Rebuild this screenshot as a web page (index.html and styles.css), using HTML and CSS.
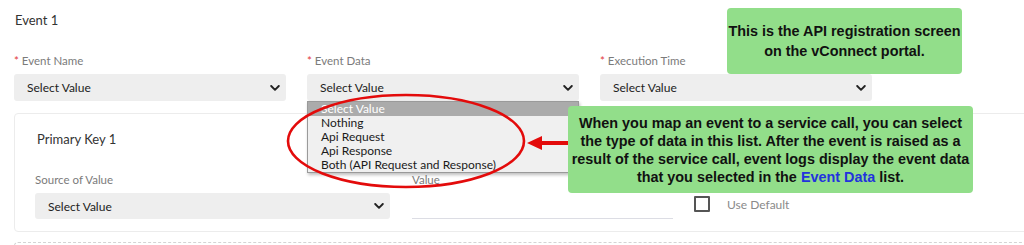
FILE: index.html
```html
<!DOCTYPE html>
<html lang="en">
<head>
<meta charset="utf-8">
<title>Event 1</title>
<link rel="stylesheet" href="styles.css">
</head>
<body>
<div class="page">
  <div class="event-title">Event 1</div>

  <div class="fields">
    <div class="field">
      <div class="label"><span class="req">*</span> Event Name</div>
      <div class="select"><span>Select Value</span><svg class="chev" viewBox="0 0 10 6" width="10" height="6"><polyline points="1.2,1 5,4.8 8.8,1"/></svg></div>
    </div>
    <div class="field field-open">
      <div class="label"><span class="req">*</span> Event Data</div>
      <div class="select"><span>Select Value</span><svg class="chev" viewBox="0 0 10 6" width="10" height="6"><polyline points="1.2,1 5,4.8 8.8,1"/></svg></div>
      <ul class="dropdown">
        <li class="opt opt-active">Select Value</li>
        <li class="opt">Nothing</li>
        <li class="opt">Api Request</li>
        <li class="opt">Api Response</li>
        <li class="opt">Both (API Request and Response)</li>
      </ul>
    </div>
    <div class="field">
      <div class="label"><span class="req">*</span> Execution Time</div>
      <div class="select"><span>Select Value</span><svg class="chev" viewBox="0 0 10 6" width="10" height="6"><polyline points="1.2,1 5,4.8 8.8,1"/></svg></div>
    </div>
  </div>

  <div class="card">
    <div class="card-title">Primary Key 1</div>
    <div class="card-row">
      <div class="field field-source">
        <div class="label">Source of Value</div>
        <div class="select select-short"><span>Select Value</span><svg class="chev" viewBox="0 0 10 6" width="10" height="6"><polyline points="1.2,1 5,4.8 8.8,1"/></svg></div>
      </div>
      <div class="field field-value">
        <div class="label">Value</div>
        <div class="text-input"></div>
      </div>
      <div class="check-row">
        <span class="checkbox"></span>
        <span class="check-label">Use Default</span>
      </div>
    </div>
  </div>

  <div class="card card-dashed"></div>

  <div class="note note-top"><p class="note-text">This is the API registration screen<br>on the vConnect portal.</p></div>
  <div class="note note-side"><p class="note-text">When you map an event to a service call, you can select<br>the type of data in this list. After the event is raised as a<br>result of the service call, event logs display the event data<br>that you selected in the <span class="note-link">Event Data</span> list.</p></div>

  <svg class="annot" width="1024" height="245" viewBox="0 0 1024 245">
    <ellipse cx="406" cy="141" rx="118" ry="46" fill="none" stroke="#e30b0b" stroke-width="2.6"/>
    <line x1="539" y1="143" x2="568" y2="143" stroke="#e30b0b" stroke-width="4"/>
    <polygon points="527,143 542,136 542,150" fill="#e30b0b"/>
  </svg>
</div>
</body>
</html>
```

FILE: styles.css
```css
* { box-sizing: border-box; }

html, body {
  margin: 0;
  padding: 0;
  background: #ffffff;
}

body {
  font-family: Lato, "Open Sans", sans-serif;
  color: #222;
  overflow: hidden;
}

.page {
  position: relative;
  width: 1024px;
  height: 245px;
  padding: 12px 0 0 14px;
  overflow: hidden;
}

.event-title {
  font-size: 13px;
  line-height: 16px;
  color: #333;
  padding-left: 1px;
}

.fields {
  display: flex;
  gap: 21px;
  margin-top: 26px;
}

.field {
  position: relative;
  display: flex;
  flex-direction: column;
  width: 272px;
}

.label {
  font-size: 11.5px;
  line-height: 14px;
  color: #7b7b7b;
  margin-bottom: 6px;
  white-space: nowrap;
}

.req {
  color: #e33a3a;
}

.select {
  display: flex;
  align-items: center;
  justify-content: space-between;
  height: 27px;
  padding: 0 6px 0 13px;
  background: #eeeeee;
  border-radius: 3px;
  font-size: 12px;
  color: #222;
}

.select-short {
  height: 26px;
}

.chev {
  fill: none;
  stroke: #222;
  stroke-width: 1.9;
  stroke-linecap: round;
  stroke-linejoin: round;
}

.dropdown {
  position: absolute;
  top: 100%;
  left: 0;
  width: 272px;
  margin: 0;
  padding: 0;
  list-style: none;
  background: #f0f0f0;
  border: 1px solid #9a9a9a;
  box-shadow: 1px 2px 3px rgba(0, 0, 0, 0.25);
  z-index: 2;
}

.opt {
  height: 14px;
  line-height: 14px;
  padding-left: 13px;
  font-size: 12px;
  color: #1a1a1a;
  white-space: nowrap;
}

.opt-active {
  background: #ababab;
  color: #ffffff;
}

.card {
  width: 1040px;
  margin-top: 12px;
  padding: 17px 0 12px 20px;
  border: 1px solid #ececec;
  border-radius: 4px;
}

.card-title {
  font-size: 13px;
  line-height: 16px;
  color: #333;
  padding-left: 2px;
}

.card-row {
  display: flex;
  align-items: flex-start;
  gap: 22px;
  margin-top: 26px;
}

.field-source {
  width: 355px;
}

.field-value {
  width: 261px;
}

.text-input {
  height: 26px;
  border-bottom: 1px solid #dcdde4;
}

.check-row {
  display: flex;
  align-items: center;
  gap: 17px;
  margin-top: 23px;
  margin-left: -1px;
}

.checkbox {
  width: 16px;
  height: 16px;
  border: 2px solid #555;
  border-radius: 1px;
}

.check-label {
  font-size: 12px;
  color: #8a8a8a;
}

.card-dashed {
  margin-top: 10px;
  height: 40px;
  padding: 0;
  border: 1px dashed #d4d4d4;
}

.note {
  position: absolute;
  display: flex;
  align-items: center;
  justify-content: center;
  background: #92de8a;
  border-radius: 4px;
  z-index: 3;
}

.note-text {
  margin: 0;
  text-align: center;
  font-family: "Liberation Sans", Arial, sans-serif;
  font-weight: bold;
  font-size: 14.4px;
  color: #111;
  white-space: nowrap;
}

.note-top {
  left: 727px;
  top: 8px;
  width: 235px;
  height: 66px;
}

.note-top .note-text {
  line-height: 20px;
}

.note-side {
  left: 568px;
  top: 106px;
  width: 405px;
  height: 87px;
}

.note-side .note-text {
  line-height: 18px;
}

.note-link {
  color: #2233dd;
}

.annot {
  position: absolute;
  left: 0;
  top: 0;
  pointer-events: none;
  z-index: 4;
}
```
